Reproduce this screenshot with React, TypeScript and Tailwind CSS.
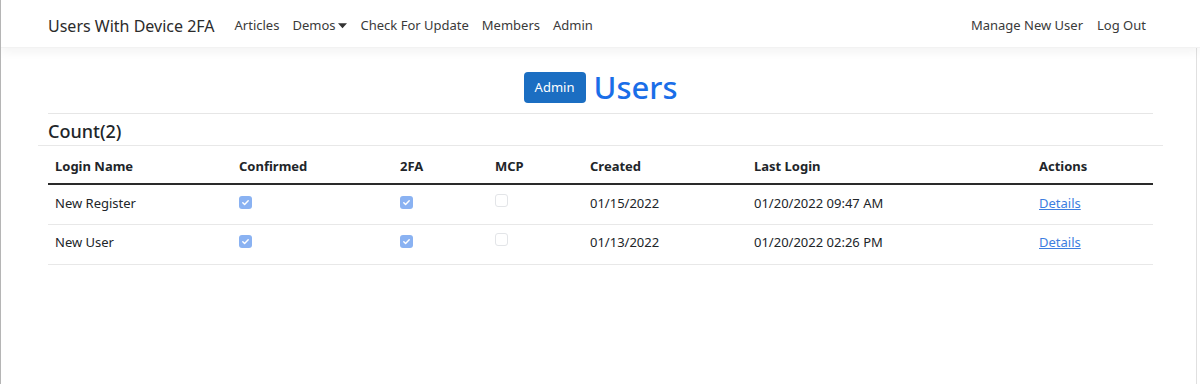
import React from "react";

const NAV_LINKS = ["Articles", "Demos", "Check For Update", "Members", "Admin"];

const USERS = [
  { name: "New Register", confirmed: true, twoFa: true, mcp: false, created: "01/15/2022", last: "01/20/2022 09:47 AM" },
  { name: "New User", confirmed: true, twoFa: true, mcp: false, created: "01/13/2022", last: "01/20/2022 02:26 PM" },
];

function Check({ on }: { on: boolean }) {
  if (!on) return <span className="inline-block w-[13px] h-[13px] rounded-[3px] border border-[#e3e5e8] bg-white align-[1px]" />;
  return (
    <span className="inline-flex items-center justify-center w-[13px] h-[13px] rounded-[3px] bg-[#8ab2f2] align-[1px]">
      <svg width="9" height="9" viewBox="0 0 10 10" fill="none">
        <path d="M2 5.2l2 2 4-4.2" stroke="white" strokeWidth="1.6" strokeLinecap="round" strokeLinejoin="round" />
      </svg>
    </span>
  );
}

export default function App() {
  return (
    <div className="w-[1200px] h-[384px] bg-white border-l border-[#b5b5b5] overflow-hidden text-[#212529] font-['Noto_Sans','Open_Sans',sans-serif] relative">
      {/* barre de navigation */}
      <nav className="h-[48px] flex items-center pt-[4px] px-[47px] bg-white shadow-[0_4px_10px_rgba(0,0,0,0.05)] border-b border-[#f2f2f2] relative z-10">
        <span className="text-[16px] text-[#2b2b2b] mr-[20px]">Users With Device 2FA</span>
        <div className="flex items-center gap-[13px] text-[13px] text-[#3a3a3a]">
          {NAV_LINKS.map((l) => (
            <span key={l} className="flex items-center">
              {l}
              {l === "Demos" && (
                <svg width="9" height="6" viewBox="0 0 10 6" className="ml-[3px]">
                  <path d="M0 0h10L5 5.5z" fill="#333" />
                </svg>
              )}
            </span>
          ))}
        </div>
        <div className="ml-auto flex items-center gap-[14px] text-[13px] text-[#3a3a3a] mr-[7px]">
          <span>Manage New User</span>
          <span>Log Out</span>
        </div>
      </nav>

      <div className="absolute right-[3px] top-0 bottom-0 w-px bg-[#e0e0e0]" />

      <main className="px-[47px]">
        <div className="flex items-center justify-center gap-[8px] pt-[23px] pb-[9px] border-b border-[#e6e6e6]">
          <span className="bg-[#1b6ec2] text-white text-[13px] rounded-[4px] w-[62px] h-[31px] flex items-center justify-center">Admin</span>
          <h1 className="text-[31px] font-medium leading-[33px] text-[#1a6ee8]">Users</h1>
        </div>

        <h4 className="-mx-[10px] px-[10px] pt-[6px] text-[18px] font-medium leading-[22px] pb-[3px] border-b border-[#e8e8e8]">Count(2)</h4>

        <table className="w-full text-[13px] border-collapse">
          <thead>
            <tr className="border-b-2 border-[#2a2a2a] font-bold text-left">
              <th className="pl-[7px] pt-[4px] h-[38px] w-[184px]">Login Name</th>
              <th className="pl-[7px] pt-[4px] w-[161px]">Confirmed</th>
              <th className="pl-[7px] pt-[4px] w-[95px]">2FA</th>
              <th className="pl-[7px] pt-[4px] w-[95px]">MCP</th>
              <th className="pl-[7px] pt-[4px] w-[164px]">Created</th>
              <th className="pl-[7px] pt-[4px] w-[285px]">Last Login</th>
              <th className="pl-[7px] pt-[4px]">Actions</th>
            </tr>
          </thead>
          <tbody>
            {USERS.map((u) => (
              <tr key={u.name} className="border-b border-[#e8e8e8] h-[40px]">
                <td className="pl-[7px] pb-[2px]">{u.name}</td>
                <td className="pl-[7px] pb-[2px]"><Check on={u.confirmed} /></td>
                <td className="pl-[7px] pb-[2px]"><Check on={u.twoFa} /></td>
                <td className="pl-[7px] pb-[2px]"><Check on={u.mcp} /></td>
                <td className="pl-[7px] pb-[2px]">{u.created}</td>
                <td className="pl-[7px] pb-[2px]">{u.last}</td>
                <td className="pl-[7px] pb-[2px]">
                  <span className="text-[#3d7ee0] underline">Details</span>
                </td>
              </tr>
            ))}
          </tbody>
        </table>
      </main>
    </div>
  );
}
